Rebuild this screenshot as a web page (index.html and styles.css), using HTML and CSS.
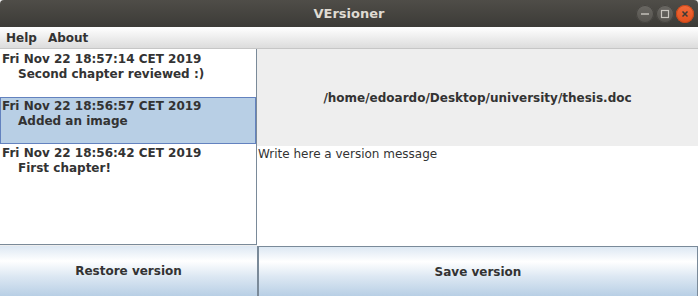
FILE: index.html
```html
<!DOCTYPE html>
<html lang="en">
<head>
  <meta charset="UTF-8" />
  <title>VErsioner</title>
  <link rel="stylesheet" href="styles.css">
</head>
<body>
  <div class="window">

    <!-- Title bar -->
    <header class="titlebar">
      <span class="title">VErsioner</span>
      <div class="controls">
        <span class="ctl min"><svg width="18" height="18" viewBox="0 0 18 18"><line x1="5" y1="9" x2="13" y2="9" stroke="#c9c6bf" stroke-width="1.4"/></svg></span>
        <span class="ctl max"><svg width="18" height="18" viewBox="0 0 18 18"><rect x="5.5" y="5.5" width="7" height="7" fill="none" stroke="#c9c6bf" stroke-width="1.2"/></svg></span>
        <span class="ctl close"><svg width="18" height="18" viewBox="0 0 18 18"><path d="M6.5 6.5 L11.5 11.5 M11.5 6.5 L6.5 11.5" stroke="#3c3b37" stroke-width="1.5"/></svg></span>
      </div>
    </header>

    <!-- Menu -->
    <nav class="menubar">
      <span class="menu">Help</span>
      <span class="menu">About</span>
    </nav>

    <main class="main">
      <ul class="history">
        <li class="entry">
          <div class="date">Fri Nov 22 18:57:14 CET 2019</div>
          <div class="note">Second chapter reviewed :)</div>
        </li>
        <li class="entry selected">
          <div class="date">Fri Nov 22 18:56:57 CET 2019</div>
          <div class="note">Added an image</div>
        </li>
        <li class="entry">
          <div class="date">Fri Nov 22 18:56:42 CET 2019</div>
          <div class="note">First chapter!</div>
        </li>
      </ul>

      <section class="detail">
        <div class="path">/home/edoardo/Desktop/university/thesis.doc</div>
        <div class="message">Write here a version message</div>
      </section>
    </main>

    <footer class="actions">
      <button class="btn restore">Restore version</button>
      <button class="btn save">Save version</button>
    </footer>

  </div>
</body>
</html>
```

FILE: styles.css
```css
* { box-sizing: border-box; margin: 0; padding: 0; }
body {
  font-family: 'DejaVu Sans', sans-serif;
  font-size: 12px;
  color: #333333;
  background: #eeeeee;
}
.window {
  width: 698px; height: 296px;
  display: flex; flex-direction: column;
  overflow: hidden;
}

/* title bar */
.titlebar {
  height: 27px;
  display: grid;
  grid-template-columns: 1fr auto 1fr;
  align-items: center;
  background: linear-gradient(#4f4d48, #3c3b37);
  border-radius: 4px 4px 0 0;
}
.title {
  grid-column: 2;
  font-weight: bold;
  font-size: 13px;
  color: #dfdbd2;
}
.controls {
  grid-column: 3;
  justify-self: end;
  display: flex;
  gap: 2px;
  padding-right: 4px;
}
.ctl {
  width: 18px; height: 18px;
  border-radius: 50%;
  display: flex;
  background: linear-gradient(#6a6863, #55534e);
  box-shadow: inset 0 0 0 1px #44423e;
}
.ctl.close {
  background: linear-gradient(#f26b3a, #e0501d);
  box-shadow: inset 0 0 0 1px #c4461a;
}

/* menu bar */
.menubar {
  height: 22px;
  display: flex;
  align-items: center;
  background: linear-gradient(#ffffff, #dcdcdc);
  border-bottom: 1px solid #c6c6c6;
}
.menu {
  padding: 0 5px 0 6px;
  font-weight: bold;
}

/* main area */
.main {
  height: 197px;
  display: flex;
}
.history {
  list-style: none;
  width: 257px;
  height: 196px;
  padding-top: 1px;
  background: #ffffff;
  border-right: 1px solid #7a8a99;
  border-bottom: 1px solid #7a8a99;
}
.entry {
  height: 47px;
  padding: 1px 0 0 1px;
  border: 1px solid transparent;
  font-weight: bold;
  line-height: 15px;
}
.entry.selected {
  background: #b8cfe5;
  border-color: #6382bf;
}
.note { padding-left: 16px; }

.detail {
  flex: 1;
  display: flex;
  flex-direction: column;
}
.path {
  height: 97px;
  display: flex;
  align-items: center;
  justify-content: center;
  font-weight: bold;
  background: #eeeeee;
}
.message {
  flex: 1;
  background: #ffffff;
  line-height: 16px;
  padding-left: 1px;
}

/* buttons */
.actions {
  height: 50px;
  display: flex;
}
.btn {
  font-family: inherit;
  font-size: 12px;
  font-weight: bold;
  color: #333333;
  border: none;
  background: linear-gradient(#dde8f3 0%, #ffffff 30%, #dde8f3 60%, #b8cfe5 100%);
}
.restore {
  width: 258px;
  border-right: 1px solid #7a8a99;
}
.save {
  flex: 1;
  border-top: 1px solid #7a8a99;
  border-left: 1px solid #7a8a99;
  border-right: 1px solid #7a8a99;
}
```
